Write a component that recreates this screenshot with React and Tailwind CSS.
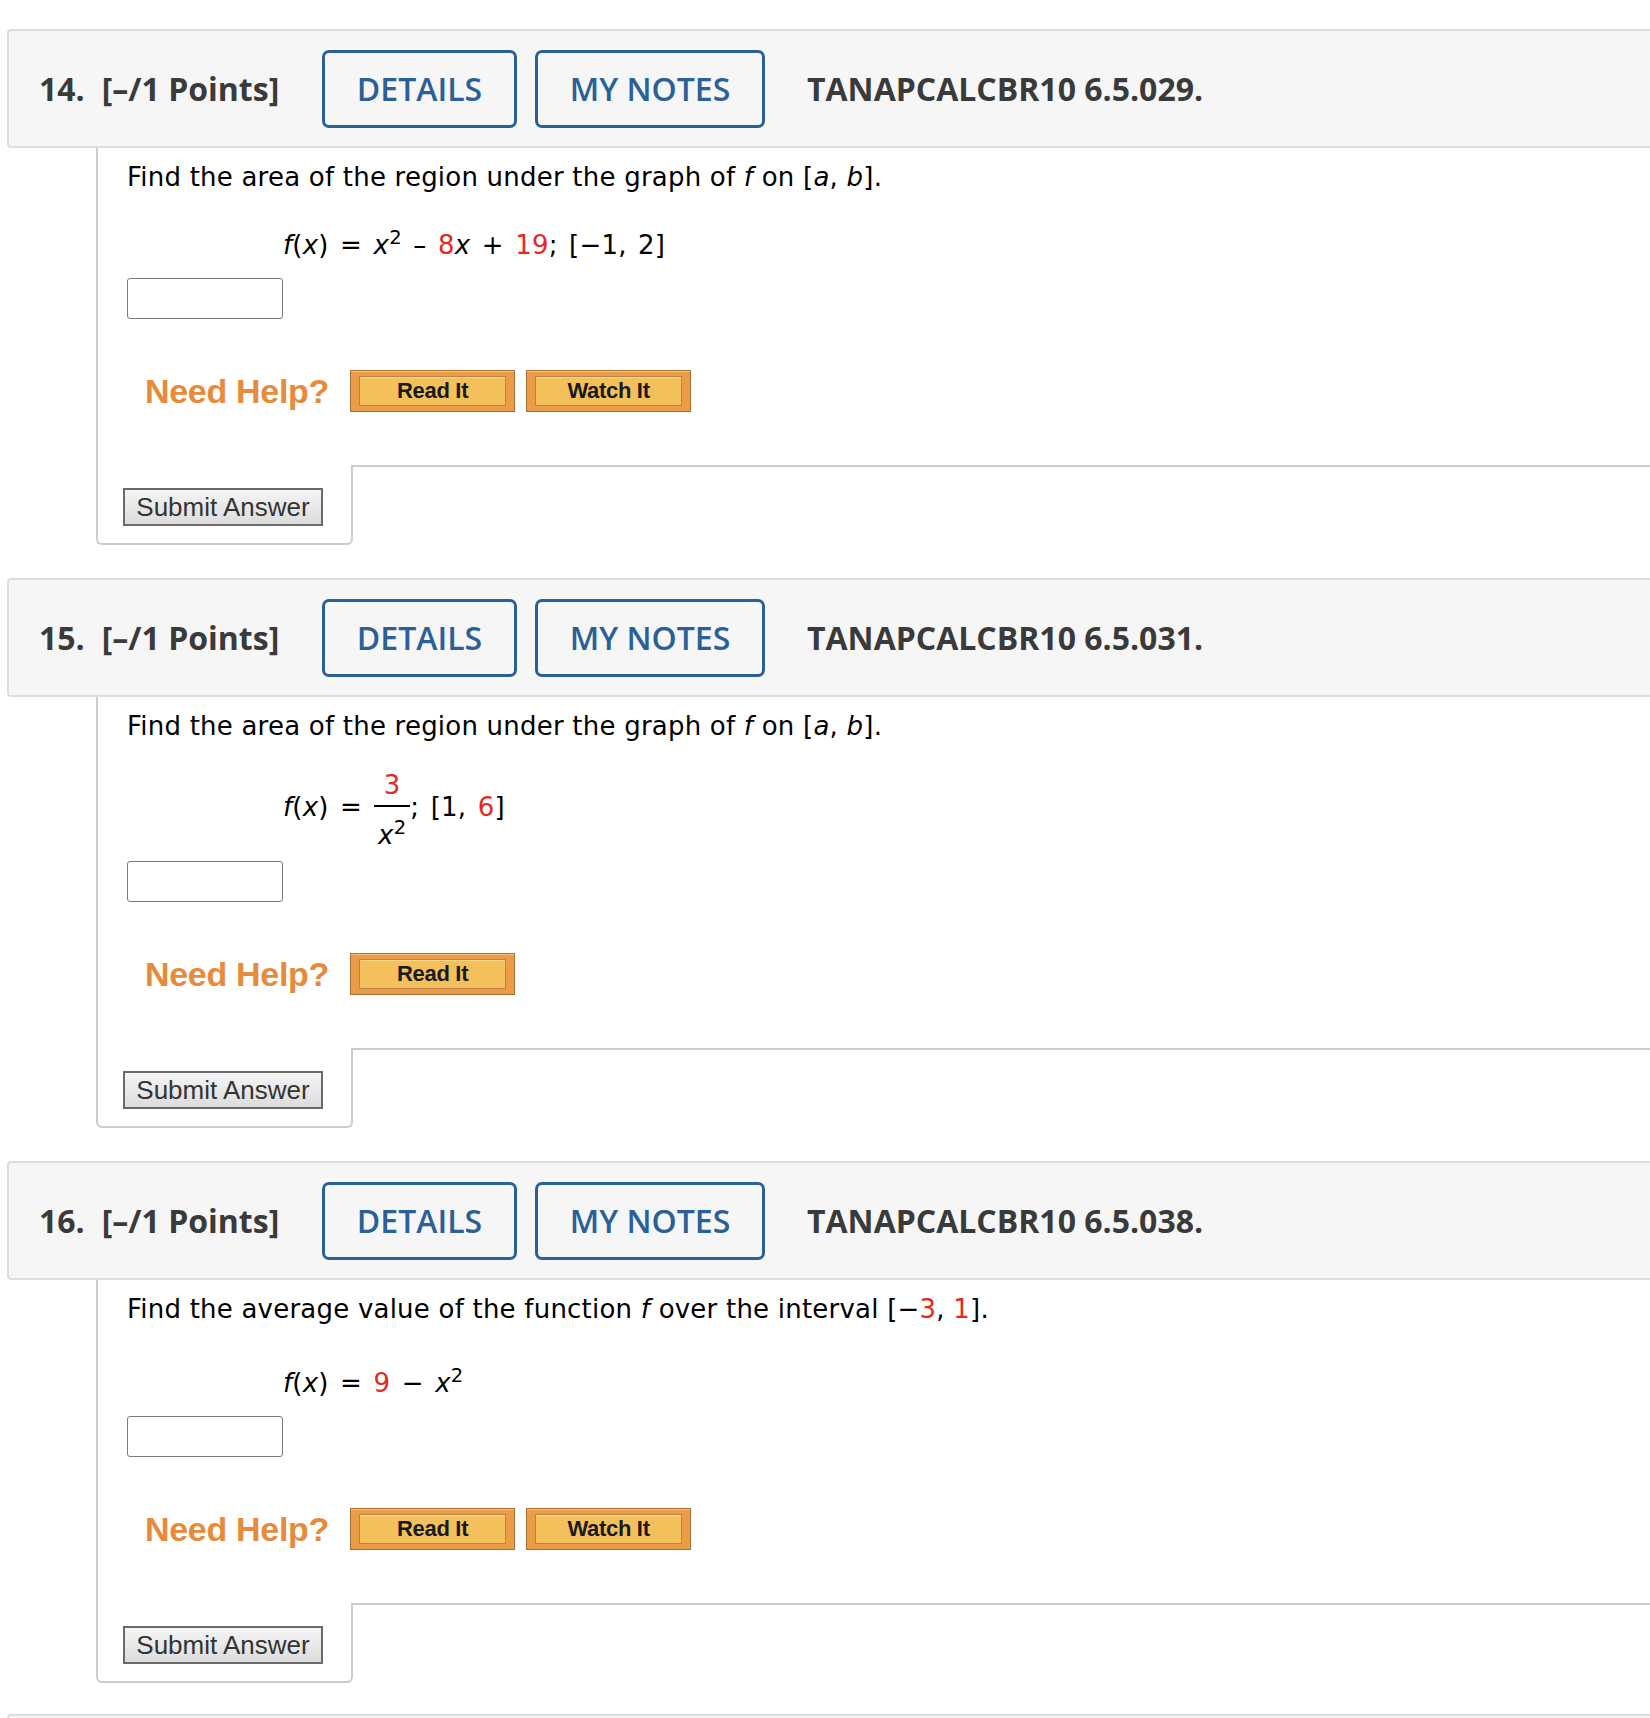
import React from "react";

const RED = "text-[#e6291d]";

function Header({ num, code }) {
  return (
    <div className="ml-[7px] h-[119px] border-2 border-r-0 border-[#dddddd] rounded-l-[4px] bg-[#f6f6f6] flex items-center pl-[30px] font-['Open_Sans',sans-serif]">
      <div className="w-[283px] shrink-0 text-[32px] font-bold text-[#3a3a3a] whitespace-nowrap">
        <span>{num}.</span>
        <span className="ml-[17px]">[–/1 Points]</span>
      </div>
      <div className="w-[195px] h-[78px] shrink-0 border-[3px] border-[#2b6096] rounded-[7px] flex items-center justify-center text-[32px] font-semibold text-[#2b6096]">
        DETAILS
      </div>
      <div className="ml-[18px] w-[230px] h-[78px] shrink-0 border-[3px] border-[#2b6096] rounded-[7px] flex items-center justify-center text-[32px] font-semibold text-[#2b6096]">
        MY NOTES
      </div>
      <div className="ml-[42px] text-[32px] font-bold text-[#3a3a3a] whitespace-nowrap">
        {code}
      </div>
    </div>
  );
}

function HelpButton({ label }) {
  return (
    <div className="w-[165px] h-[42px] shrink-0 border border-[#a86f33] bg-[#ec9c46] shadow-[inset_0_1px_0_#f7c27e] px-[8px] py-[5px]">
      <div className="h-full border border-[#b98447] bg-[#f3c05c] shadow-[inset_0_1px_1px_#f9d98f] flex items-center justify-center font-['Liberation_Sans',Arial,sans-serif] font-bold text-[22px] text-[#1a1a1a] tracking-[-0.3px]">
        {label}
      </div>
    </div>
  );
}

function Question({ num, code, text, equation, eqMt, inputMt, watch }) {
  return (
    <section>
      <Header num={num} code={code} />
      <div className="ml-[96px]">
        <div className="border-l-2 border-[#cccccc] pl-[29px] font-['DejaVu_Sans',Verdana,sans-serif] text-[26px] leading-[28px] text-black">
          <p className="pt-[15px] h-[43px] leading-[28px] whitespace-nowrap tracking-[0.22px]">{text}</p>
          <div className="pl-[156px] whitespace-nowrap tracking-[0.2px] [word-spacing:3px]" style={{ marginTop: eqMt }}>
            {equation}
          </div>
          <div style={{ marginTop: inputMt }}>
            <div className="w-[156px] h-[41px] border-[1.5px] border-[#7a7a7a] rounded-[3px] bg-white"></div>
          </div>
          <div className="mt-[51px] h-[42px] flex items-center pl-[18px]">
            <span className="font-['Liberation_Sans',Arial,sans-serif] font-bold text-[34px] leading-[42px] text-[#e68b3b] tracking-[-0.3px] whitespace-nowrap">
              Need Help?
            </span>
            <div className="ml-[21px] flex gap-[11px]">
              <HelpButton label="Read It" />
              {watch && <HelpButton label="Watch It" />}
            </div>
          </div>
          <div className="h-[53px]"></div>
        </div>
        <div className="flex">
          <div className="w-[257px] h-[80px] shrink-0 border-l-2 border-b-2 border-r-2 border-[#cccccc] rounded-b-[6px] pl-[25px] pt-[23px]">
            <div className="w-[200px] h-[38px] border-2 border-[#6a6a6a] bg-gradient-to-b from-[#f5f5f5] to-[#dcdcdc] flex items-center justify-center font-['Liberation_Sans',Arial,sans-serif] text-[26px] leading-[30px] text-[#333333]">
              Submit Answer
            </div>
          </div>
          <div className="flex-1 border-t-2 border-[#cccccc]"></div>
        </div>
      </div>
    </section>
  );
}

const I = ({ children }) => <i>{children}</i>;

export default function App() {
  return (
    <div className="w-[1650px] h-[1718px] bg-white pt-[29px] overflow-hidden">
      <Question
        num="14"
        code="TANAPCALCBR10 6.5.029."
        text={
          <>
            Find the area of the region under the graph of <I>f</I> on [<I>a</I>, <I>b</I>].
          </>
        }
        equation={
          <div className="h-[28px] leading-[28px]">
            <I>f</I>(<I>x</I>) = <I>x</I>
            <sup>2</sup> – <span className={RED}>8</span>
            <I>x</I> + <span className={RED}>19</span>; [−1, 2]
          </div>
        }
        eqMt={40}
        inputMt={19}
        watch
      />
      <div className="h-[33px]"></div>
      <Question
        num="15"
        code="TANAPCALCBR10 6.5.031."
        text={
          <>
            Find the area of the region under the graph of <I>f</I> on [<I>a</I>, <I>b</I>].
          </>
        }
        equation={
          <div className="h-[84px] flex items-center">
            <span>
              <I>f</I>(<I>x</I>) =
            </span>
            <span className="inline-flex flex-col items-center ml-[12px]">
              <span className={`${RED} leading-[40px] pt-[7px]`}>3</span>
              <span className="block w-full h-[2px] bg-black"></span>
              <span className="leading-[42px] pt-[7px] px-[4px]">
                <I>x</I>
                <sup>2</sup>
              </span>
            </span>
            <span>
              ; [1, <span className={RED}>6</span>]
            </span>
          </div>
        }
        eqMt={25}
        inputMt={12}
        watch={false}
      />
      <div className="h-[33px]"></div>
      <Question
        num="16"
        code="TANAPCALCBR10 6.5.038."
        text={
          <>
            Find the average value of the function <I>f</I> over the interval [−<span className={RED}>3</span>,{" "}
            <span className={RED}>1</span>].
          </>
        }
        equation={
          <div className="h-[28px] leading-[28px]">
            <I>f</I>(<I>x</I>) = <span className={RED}>9</span> − <I>x</I>
            <sup>2</sup>
          </div>
        }
        eqMt={46}
        inputMt={19}
        watch
      />
      <div className="h-[31px]"></div>
      <div className="ml-[7px] h-[40px] border-t-2 border-l-2 rounded-tl-[4px] border-[#dddddd] bg-[#f6f6f6]"></div>
    </div>
  );
}
